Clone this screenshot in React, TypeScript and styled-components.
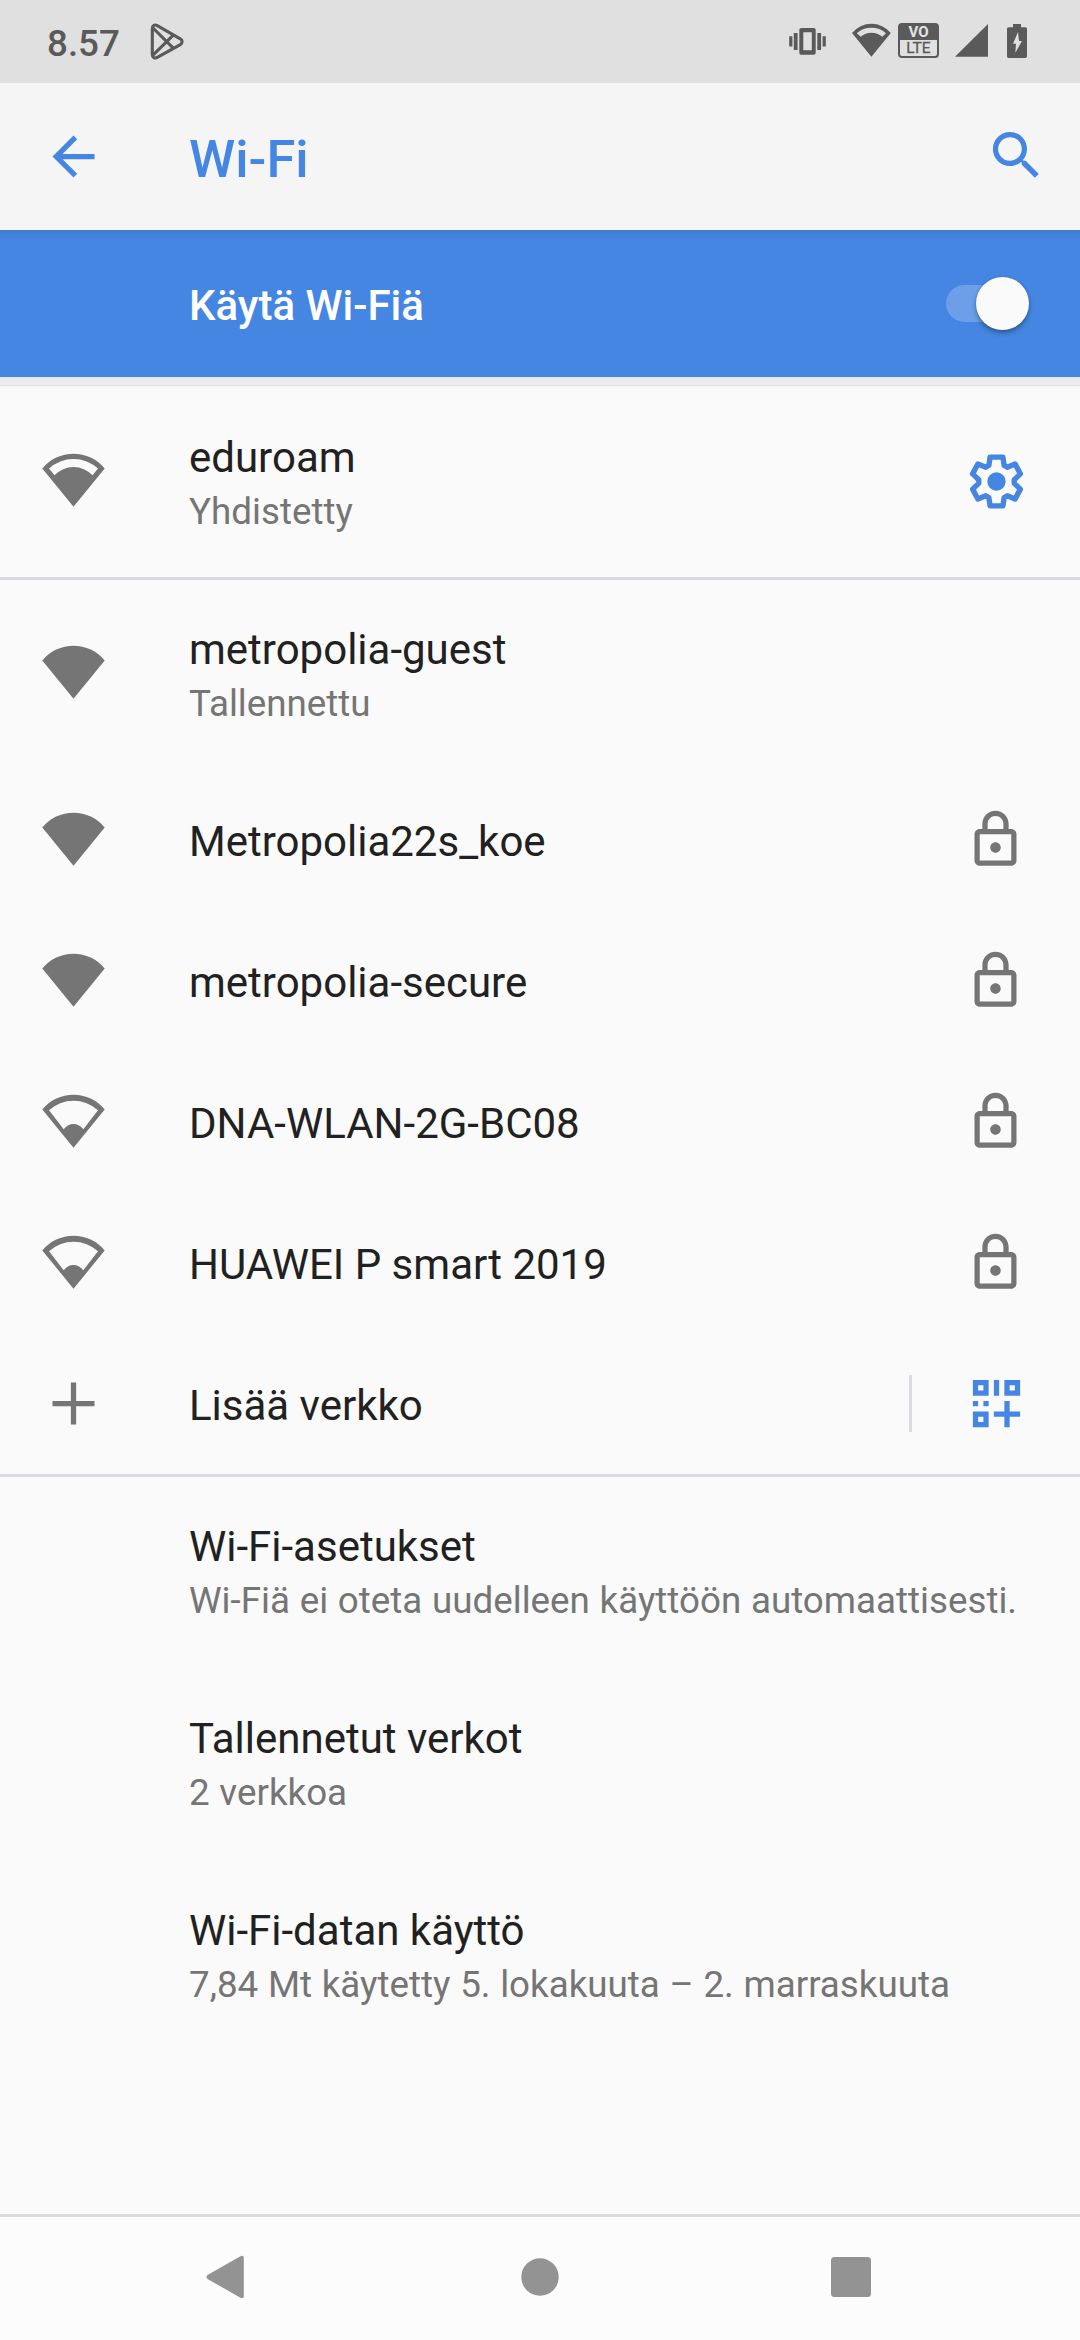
import React from "react";
import styled, { createGlobalStyle } from "styled-components";

const ACCENT = "#4486e2";
const GREY = "#757575";
const STATUS = "#5a5a5a";

const GlobalStyle = createGlobalStyle`
  * { box-sizing: border-box; }
  body { margin: 0; background: #fafafa; }
`;

const Screen = styled.div`
  display: flex;
  flex-direction: column;
  width: 1080px;
  height: 2340px;
  overflow: hidden;
  background: #fafafa;
  font-family: Roboto, "Noto Sans", sans-serif;
`;

const StatusBar = styled.header`
  display: flex;
  align-items: flex-start;
  flex: none;
  height: 83px;
  padding: 22px 53px 0 47px;
  background: #e0e0e0;
  color: ${STATUS};
`;

const Clock = styled.div`
  width: 102px;
  font-size: 36.75px;
  font-weight: 500;
  line-height: 43px;
`;

const StatusIcons = styled.div`
  display: flex;
  margin-left: auto;
`;

const StatusSvg = styled.svg<{ $gap?: number }>`
  display: block;
  flex: none;
  margin-right: ${(p) => p.$gap ?? 0}px;
`;

const LteBadge = styled.div`
  display: flex;
  flex-direction: column;
  width: 41px;
  height: 35px;
  margin: 1px 16px 0 0;
  border: 2px solid ${STATUS};
  border-radius: 4px;
  text-align: center;
`;

const BadgeTop = styled.div`
  height: 15px;
  background: ${STATUS};
  color: #e4e4e4;
  font-size: 15px;
  font-weight: 700;
  line-height: 14px;
`;

const BadgeBottom = styled.div`
  height: 16px;
  font-size: 15.5px;
  font-weight: 400;
  line-height: 17px;
  -webkit-text-stroke: 0.3px ${STATUS};
`;

const AppBar = styled.div`
  display: flex;
  align-items: flex-start;
  flex: none;
  height: 147px;
  padding: 0 32px 0 42px;
  background: #f5f5f5;
`;

const BarIcon = styled.svg<{ $top: number }>`
  display: block;
  flex: none;
  width: 63px;
  height: 63px;
  margin-top: ${(p) => p.$top}px;
  fill: ${ACCENT};
`;

const AppTitle = styled.h1`
  flex: 1;
  margin: 45px 0 0 84px;
  color: ${ACCENT};
  font-size: 52.5px;
  font-weight: 500;
  line-height: 62px;
`;

const SwitchBar = styled.div`
  display: flex;
  justify-content: space-between;
  flex: none;
  height: 147px;
  padding: 0 51px 0 189px;
  background: linear-gradient(#3e7bce, #4182da 4px, ${ACCENT} 11px);
`;

const SwitchLabel = styled.div`
  margin-top: 51px;
  color: #fff;
  font-size: 42px;
  font-weight: 500;
  line-height: 49px;
`;

const Track = styled.div`
  display: flex;
  align-items: center;
  justify-content: flex-end;
  width: 74px;
  height: 37px;
  margin: 55px 9px 0 0;
  border-radius: 19px;
  background: #6c9fe8;
`;

const Thumb = styled.div`
  flex: none;
  width: 53px;
  height: 53px;
  margin-right: -9px;
  border-radius: 50%;
  background: #fafafa;
  box-shadow: 0 3px 5px rgba(0, 0, 0, 0.33), 0 0 2px rgba(0, 0, 0, 0.15);
`;

const Separator = styled.div`
  position: relative;
  flex: none;
  height: 8px;
  background: linear-gradient(#e6e6e6, #ececec 4px, #ededed);
  box-shadow: 0 1px 0 #e2e2e2, 0 2px 0 #f5f5f5, 0 3px 0 #f8f8f8;
`;

const Row = styled.div<{ $tall?: boolean; $line?: boolean }>`
  display: flex;
  align-items: flex-start;
  flex: none;
  height: ${(p) => (p.$tall ? 192 : 141)}px;
  padding-right: 52px;
  box-shadow: ${(p) => (p.$line ? "inset 0 3px 0 #dadbe0" : "none")};
`;

const LeadSlot = styled.div<{ $tall?: boolean }>`
  flex: none;
  width: 189px;
  padding: ${(p) => (p.$tall ? 64 : 39)}px 0 0 42px;
`;

const TrailSlot = styled.div<{ $tall?: boolean; $nudge?: boolean }>`
  flex: none;
  padding-top: ${(p) => (p.$tall ? 65 : 39)}px;
  margin-right: ${(p) => (p.$nudge ? 1 : 0)}px;
`;

const Texts = styled.div`
  flex: 1;
  padding-top: 44px;
  white-space: nowrap;
`;

const RowTitle = styled.div`
  color: #212121;
  font-size: 42px;
  line-height: 57px;
`;

const RowSummary = styled.div`
  color: ${GREY};
  font-size: 36.75px;
  line-height: 51px;
  word-spacing: 0.6px;
`;

const RowIcon = styled.svg<{ $color?: string }>`
  display: block;
  width: 63px;
  height: 63px;
  fill: ${(p) => p.$color ?? GREY};
`;

const VerticalRule = styled.div`
  width: 3px;
  height: 57px;
  margin: 42px 53px 0 0;
  background: #dadbe0;
`;

const NavBar = styled.nav`
  display: flex;
  align-items: center;
  flex: none;
  height: 126px;
  margin-top: auto;
  padding: 0 0 3px 206px;
  border-top: 3px solid #dcdcdc;
  background: #fcfcfc;
`;

const NavSvg = styled.svg<{ $gap?: number }>`
  display: block;
  flex: none;
  margin-right: ${(p) => p.$gap ?? 0}px;
  fill: #939393;
`;

type Level = "full" | "high" | "low";

const WIFI_CUTOUT: Record<Level, string> = {
  full: "",
  high: "M7 19.6A36 36 0 0 1 56 19.6L50.5 26.3A26 26 0 0 0 12.5 26.3Z",
  low: "M7 20.2A36.3 36.3 0 0 1 56 20.2L41.3 39.3A11.7 11.7 0 0 0 21.7 39.3Z",
};

const WifiIcon = ({ level }: { level: Level }) => (
  <RowIcon viewBox="0 0 63 63">
    <path fillRule="evenodd" d={`M.3 19.4A40.6 40.6 0 0 1 62.7 19.4L31.5 57.8Z${WIFI_CUTOUT[level]}`} />
  </RowIcon>
);

const LockIcon = () => (
  <RowIcon viewBox="0 0 24 24">
    <path d="M18 8h-1V6c0-2.76-2.24-5-5-5S7 3.24 7 6v2H6c-1.1 0-2 .9-2 2v10c0 1.1.9 2 2 2h12c1.1 0 2-.9 2-2V10c0-1.1-.9-2-2-2zM9 6c0-1.66 1.34-3 3-3s3 1.34 3 3v2H9V6zm9 14H6V10h12v10zm-6-3c1.1 0 2-.9 2-2s-.9-2-2-2-2 .9-2 2 .9 2 2 2z" />
  </RowIcon>
);

const GearIcon = () => (
  <RowIcon viewBox="0 0 24 24" $color={ACCENT}>
    <path
      fill="none"
      stroke={ACCENT}
      strokeWidth="2.05"
      strokeLinejoin="round"
      d="M9.55 2.7H14.45L14.9 5.9L16.1 6.55L19.1 5.35L21.1 9.1L18.75 11.3V12.7L21.1 14.9L19.1 18.65L16.1 17.45L14.9 18.1L14.45 21.3H9.55L9.1 18.1L7.9 17.45L4.9 18.65L2.9 14.9L5.25 12.7V11.3L2.9 9.1L4.9 5.35L7.9 6.55L9.1 5.9Z"
    />
    <circle cx="12" cy="12" r="3.5" />
  </RowIcon>
);

const QrAddIcon = () => (
  <RowIcon viewBox="0 0 24 24" $color={ACCENT}>
    <path
      fillRule="evenodd"
      d="M3 3h6v6H3zM5 5v2h2V5zM15 3h6v6h-6zM17 5v2h2V5zM3 15h6v6H3zM5 17v2h2v-2zM11 3h2v6h-2zM3 11h2v2H3zM7 11h2v2H7zM15 11h2v4h4v2h-4v4h-2v-4h-4v-2h4z"
    />
  </RowIcon>
);

const PlusIcon = () => (
  <RowIcon viewBox="0 0 24 24">
    <path d="M20 13h-7v7h-2v-7H4v-2h7V4h2v7h7z" />
  </RowIcon>
);

interface Network {
  name: string;
  level: Level;
  status?: string;
  line?: boolean;
  trailing?: "gear" | "lock";
}

const networks: Network[] = [
  { name: "eduroam", level: "high", status: "Yhdistetty", trailing: "gear" },
  { name: "metropolia-guest", level: "full", status: "Tallennettu", line: true },
  { name: "Metropolia22s_koe", level: "full", trailing: "lock" },
  { name: "metropolia-secure", level: "full", trailing: "lock" },
  { name: "DNA-WLAN-2G-BC08", level: "low", trailing: "lock" },
  { name: "HUAWEI P smart 2019", level: "low", trailing: "lock" },
];

const settings = [
  { title: "Wi-Fi-asetukset", summary: "Wi-Fiä ei oteta uudelleen käyttöön automaattisesti." },
  { title: "Tallennetut verkot", summary: "2 verkkoa" },
  { title: "Wi-Fi-datan käyttö", summary: "7,84 Mt käytetty 5. lokakuuta – 2. marraskuuta" },
];

export default function App() {
  return (
    <Screen>
      <GlobalStyle />
      <StatusBar>
        <Clock>8.57</Clock>
        <StatusSvg width="36" height="40" viewBox="0 0 36 40" fill="none" stroke={STATUS} strokeWidth="3.1" strokeLinejoin="round">
          <path d="M3.3 6.5V32.5c0 3 2.4 4.3 5 2.9L31.3 22.6c2.4-1.5 2.4-4.3 0-5.8L8.3 3.6c-2.6-1.4-5-.1-5 2.9z" />
          <path d="M4 6L24.5 26.3M4 33.2L24.5 12.9" />
        </StatusSvg>
        <StatusIcons>
          <StatusSvg width="38" height="36" viewBox="0 0 38 36" $gap={25} fill={STATUS}>
            <path
              fillRule="evenodd"
              d="M12.3 6h12.4a2 2 0 0 1 2 2v22.7a2 2 0 0 1-2 2H12.3a2 2 0 0 1-2-2V8a2 2 0 0 1 2-2zM14.3 10.3v18h8.5v-18z"
            />
            <path d="M4.8 11h3.8v17H4.8zM.2 14.2h3.2v10.4H.2zM28.3 11h3.8v17h-3.8zM33.6 14.2h3.2v10.4h-3.2z" />
          </StatusSvg>
          <StatusSvg width="39" height="36" viewBox="0 0 39 36" $gap={7} fill={STATUS}>
            <path
              fillRule="evenodd"
              d="M0 11A25 25 0 0 1 38.8 11L19.4 34.8ZM4.8 11.2A22.5 22.5 0 0 1 34 11.2L30.2 14.8A16.5 16.5 0 0 0 8.8 14.8Z"
            />
          </StatusSvg>
          <LteBadge>
            <BadgeTop>VO</BadgeTop>
            <BadgeBottom>LTE</BadgeBottom>
          </LteBadge>
          <StatusSvg width="33" height="36" viewBox="0 0 33 36" $gap={19} fill={STATUS}>
            <path d="M0 34.8L33 2v32.8z" />
          </StatusSvg>
          <StatusSvg width="20" height="36" viewBox="0 0 20 36" fill={STATUS}>
            <path
              fillRule="evenodd"
              d="M6 2h8v3.3h4.3c1 0 1.7.7 1.7 1.7v27.3c0 1-.7 1.7-1.7 1.7H1.7C.7 36 0 35.3 0 34.3V7c0-1 .7-1.7 1.7-1.7H6zM11 10L6 21.8h3L8.3 30.8L15 19h-3z"
            />
          </StatusSvg>
        </StatusIcons>
      </StatusBar>

      <AppBar>
        <BarIcon viewBox="0 0 24 24" $top={42}>
          <path d="M20 11H7.83l5.59-5.59L12 4l-8 8 8 8 1.41-1.41L7.83 13H20v-2z" />
        </BarIcon>
        <AppTitle>Wi-Fi</AppTitle>
        <BarIcon viewBox="0 0 24 24" $top={41}>
          <path d="M15.5 14h-.79l-.28-.27C15.41 12.59 16 11.11 16 9.5 16 5.91 13.09 3 9.5 3S3 5.91 3 9.5 5.91 16 9.5 16c1.61 0 3.09-.59 4.23-1.57l.27.28v.79l5 4.99L20.49 19l-4.99-5zm-6 0C7.01 14 5 11.99 5 9.5S7.01 5 9.5 5 14 7.01 14 9.5 11.99 14 9.5 14z" />
        </BarIcon>
      </AppBar>

      <SwitchBar>
        <SwitchLabel>Käytä Wi-Fiä</SwitchLabel>
        <Track>
          <Thumb />
        </Track>
      </SwitchBar>
      <Separator />

      {networks.map((n) => {
        const tall = Boolean(n.status);
        return (
          <Row key={n.name} $tall={tall} $line={n.line}>
            <LeadSlot $tall={tall}>
              <WifiIcon level={n.level} />
            </LeadSlot>
            <Texts>
              <RowTitle>{n.name}</RowTitle>
              {n.status && <RowSummary>{n.status}</RowSummary>}
            </Texts>
            {n.trailing && (
              <TrailSlot $tall={tall} $nudge={n.trailing === "lock"}>
                {n.trailing === "gear" ? <GearIcon /> : <LockIcon />}
              </TrailSlot>
            )}
          </Row>
        );
      })}

      <Row>
        <LeadSlot>
          <PlusIcon />
        </LeadSlot>
        <Texts>
          <RowTitle>Lisää verkko</RowTitle>
        </Texts>
        <VerticalRule />
        <TrailSlot>
          <QrAddIcon />
        </TrailSlot>
      </Row>

      {settings.map((s, i) => (
        <Row key={s.title} $tall $line={i === 0}>
          <LeadSlot $tall />
          <Texts>
            <RowTitle>{s.title}</RowTitle>
            <RowSummary>{s.summary}</RowSummary>
          </Texts>
        </Row>
      ))}

      <NavBar>
        <NavSvg width="38" height="44" viewBox="0 0 38 44" $gap={277}>
          <path d="M1.5 20.1L34 1.5C36.5 .2 37.8 1 37.8 3V41c0 2-1.3 2.8-3.8 1.5L1.5 23.9C.2 22.9 .2 21.1 1.5 20.1z" />
        </NavSvg>
        <NavSvg width="38" height="38" viewBox="0 0 38 38" $gap={272}>
          <circle cx="19" cy="19" r="18.7" />
        </NavSvg>
        <NavSvg width="40" height="40" viewBox="0 0 40 40">
          <rect width="40" height="40" rx="3.5" />
        </NavSvg>
      </NavBar>
    </Screen>
  );
}
